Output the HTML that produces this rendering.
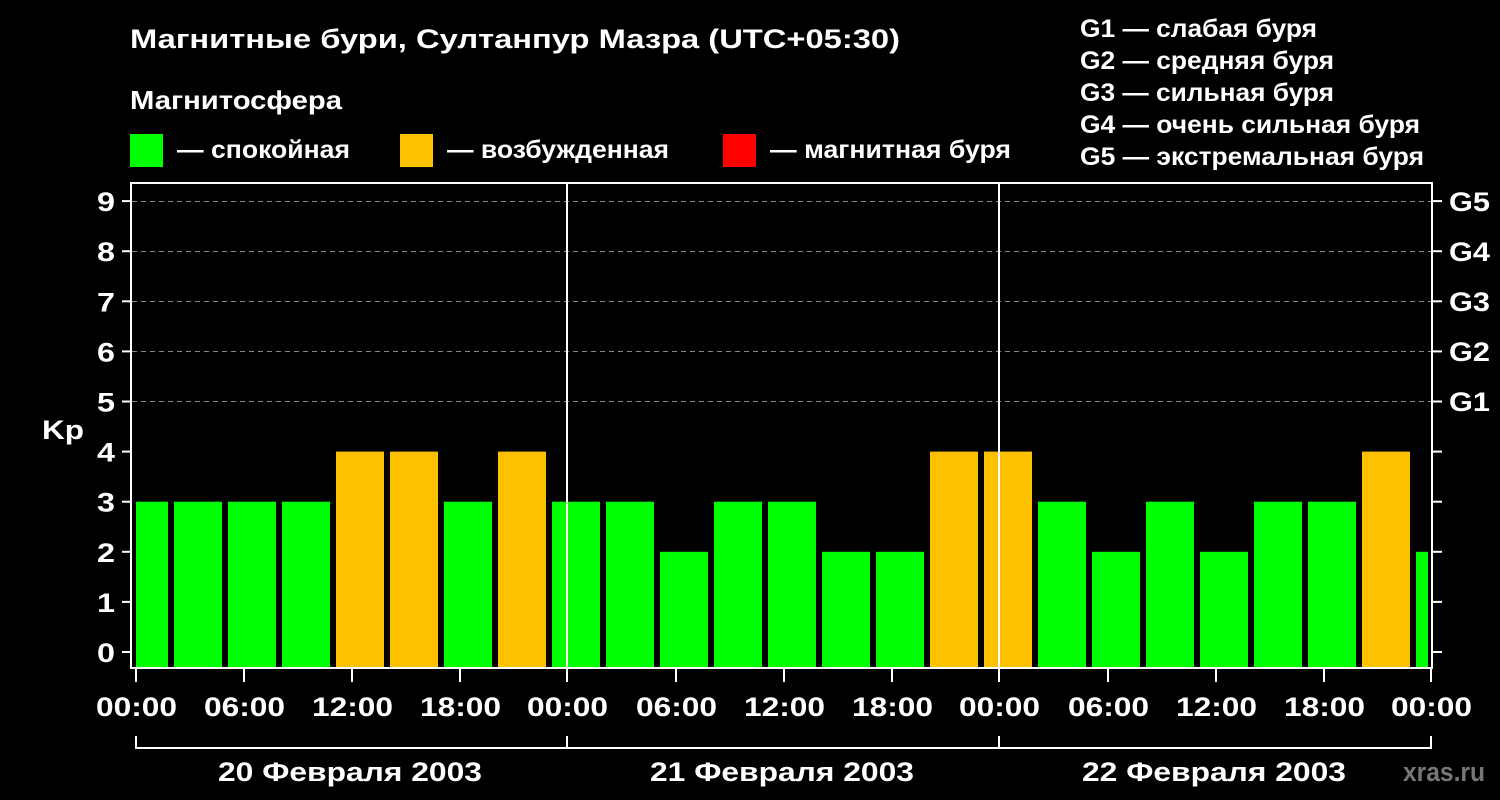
<!DOCTYPE html><html><head><meta charset="utf-8"><style>body{margin:0;background:#000}svg{display:block}text{font-family:"Liberation Sans",sans-serif;font-weight:bold;fill:#fff}</style></head><body>
<svg width="1500" height="800" xmlns="http://www.w3.org/2000/svg">
<rect width="1500" height="800" fill="#000"/>
<text x="130" y="48" font-size="27" textLength="770" lengthAdjust="spacingAndGlyphs">Магнитные бури, Султанпур Мазра (UTC+05:30)</text>
<text x="130" y="109" font-size="26" textLength="212" lengthAdjust="spacingAndGlyphs">Магнитосфера</text>
<rect x="130" y="134" width="33" height="33" fill="#00ff00"/><text x="177" y="158" font-size="25" textLength="173" lengthAdjust="spacingAndGlyphs">— спокойная</text>
<rect x="400" y="134" width="33" height="33" fill="#ffc000"/><text x="447" y="158" font-size="25" textLength="222" lengthAdjust="spacingAndGlyphs">— возбужденная</text>
<rect x="723" y="134" width="33" height="33" fill="#ff0000"/><text x="770" y="158" font-size="25" textLength="241" lengthAdjust="spacingAndGlyphs">— магнитная буря</text>
<g font-size="25"><text x="1080" y="37" textLength="237" lengthAdjust="spacingAndGlyphs">G1 — слабая буря</text><text x="1080" y="69" textLength="254" lengthAdjust="spacingAndGlyphs">G2 — средняя буря</text><text x="1080" y="101" textLength="254" lengthAdjust="spacingAndGlyphs">G3 — сильная буря</text><text x="1080" y="133" textLength="340" lengthAdjust="spacingAndGlyphs">G4 — очень сильная буря</text><text x="1080" y="165" textLength="344" lengthAdjust="spacingAndGlyphs">G5 — экстремальная буря</text></g>
<g stroke="#888" stroke-dasharray="5,4" stroke-width="1">
<line x1="132" x2="1431" y1="201.5" y2="201.5"/><line x1="132" x2="1431" y1="251.5" y2="251.5"/><line x1="132" x2="1431" y1="301.5" y2="301.5"/><line x1="132" x2="1431" y1="351.5" y2="351.5"/><line x1="132" x2="1431" y1="401.5" y2="401.5"/></g>
<defs><clipPath id="c"><rect x="136" y="183" width="1292" height="485"/></clipPath></defs>
<g clip-path="url(#c)" id="bars"></g>
<g stroke="#fff" stroke-width="2" fill="none">
<rect x="131" y="183" width="1301" height="485"/>
<line x1="567" y1="183" x2="567" y2="668"/><line x1="999" y1="183" x2="999" y2="668"/>
<path d="M136 736V748H1431V736M567 736V748M999 748V736"/>
</g>
<g id="ax"></g>
<text x="42" y="439" font-size="27" textLength="42" lengthAdjust="spacingAndGlyphs">Kp</text>
<g font-size="27"><text x="1449" y="211" textLength="41" lengthAdjust="spacingAndGlyphs">G5</text><text x="1449" y="261" textLength="41" lengthAdjust="spacingAndGlyphs">G4</text><text x="1449" y="311" textLength="41" lengthAdjust="spacingAndGlyphs">G3</text><text x="1449" y="361" textLength="41" lengthAdjust="spacingAndGlyphs">G2</text><text x="1449" y="411" textLength="41" lengthAdjust="spacingAndGlyphs">G1</text></g>
<g font-size="27"><text x="218" y="781" textLength="264" lengthAdjust="spacingAndGlyphs">20 Февраля 2003</text><text x="650" y="781" textLength="264" lengthAdjust="spacingAndGlyphs">21 Февраля 2003</text><text x="1082" y="781" textLength="264" lengthAdjust="spacingAndGlyphs">22 Февраля 2003</text></g>
<text x="1403" y="781" font-size="27" textLength="82" lengthAdjust="spacingAndGlyphs" style="fill:#777">xras.ru</text>
</svg>
<script>
var v=[3,3,3,3,4,4,3,4,3,3,2,3,3,2,2,4,4,3,2,3,2,3,3,4,2],ns="http://www.w3.org/2000/svg",b=document.getElementById("bars"),a=document.getElementById("ax");
function el(p,t,at){var e=document.createElementNS(ns,t);for(var k in at)e.setAttribute(k,at[k]);p.appendChild(e);return e}
v.forEach(function(h,k){var top=652-50.1*h;el(b,"rect",{x:120+54*k,y:top,width:48,height:668-top,fill:h>=4?"#ffc000":"#00ff00"})});
for(var i=0;i<=9;i++){var y=652-50.1*i;el(a,"line",{x1:122,x2:131,y1:y,y2:y,stroke:"#fff","stroke-width":2});el(a,"line",{x1:1432,x2:1442,y1:y,y2:y,stroke:"#fff","stroke-width":2});var t=el(a,"text",{x:97,y:y+10,"font-size":27,textLength:18,lengthAdjust:"spacingAndGlyphs"});t.textContent=i}
var L=["00:00","06:00","12:00","18:00"];for(var j=0;j<=12;j++){var x=136+108*j;if(j==4)x=567;if(j==8)x=999;if(j==12)x=1431;el(a,"line",{x1:x,x2:x,y1:668,y2:682,stroke:"#fff","stroke-width":2});var t=el(a,"text",{x:x-40,y:716,"font-size":27,textLength:81,lengthAdjust:"spacingAndGlyphs"});t.textContent=L[j%4]}
</script>
</body></html>
